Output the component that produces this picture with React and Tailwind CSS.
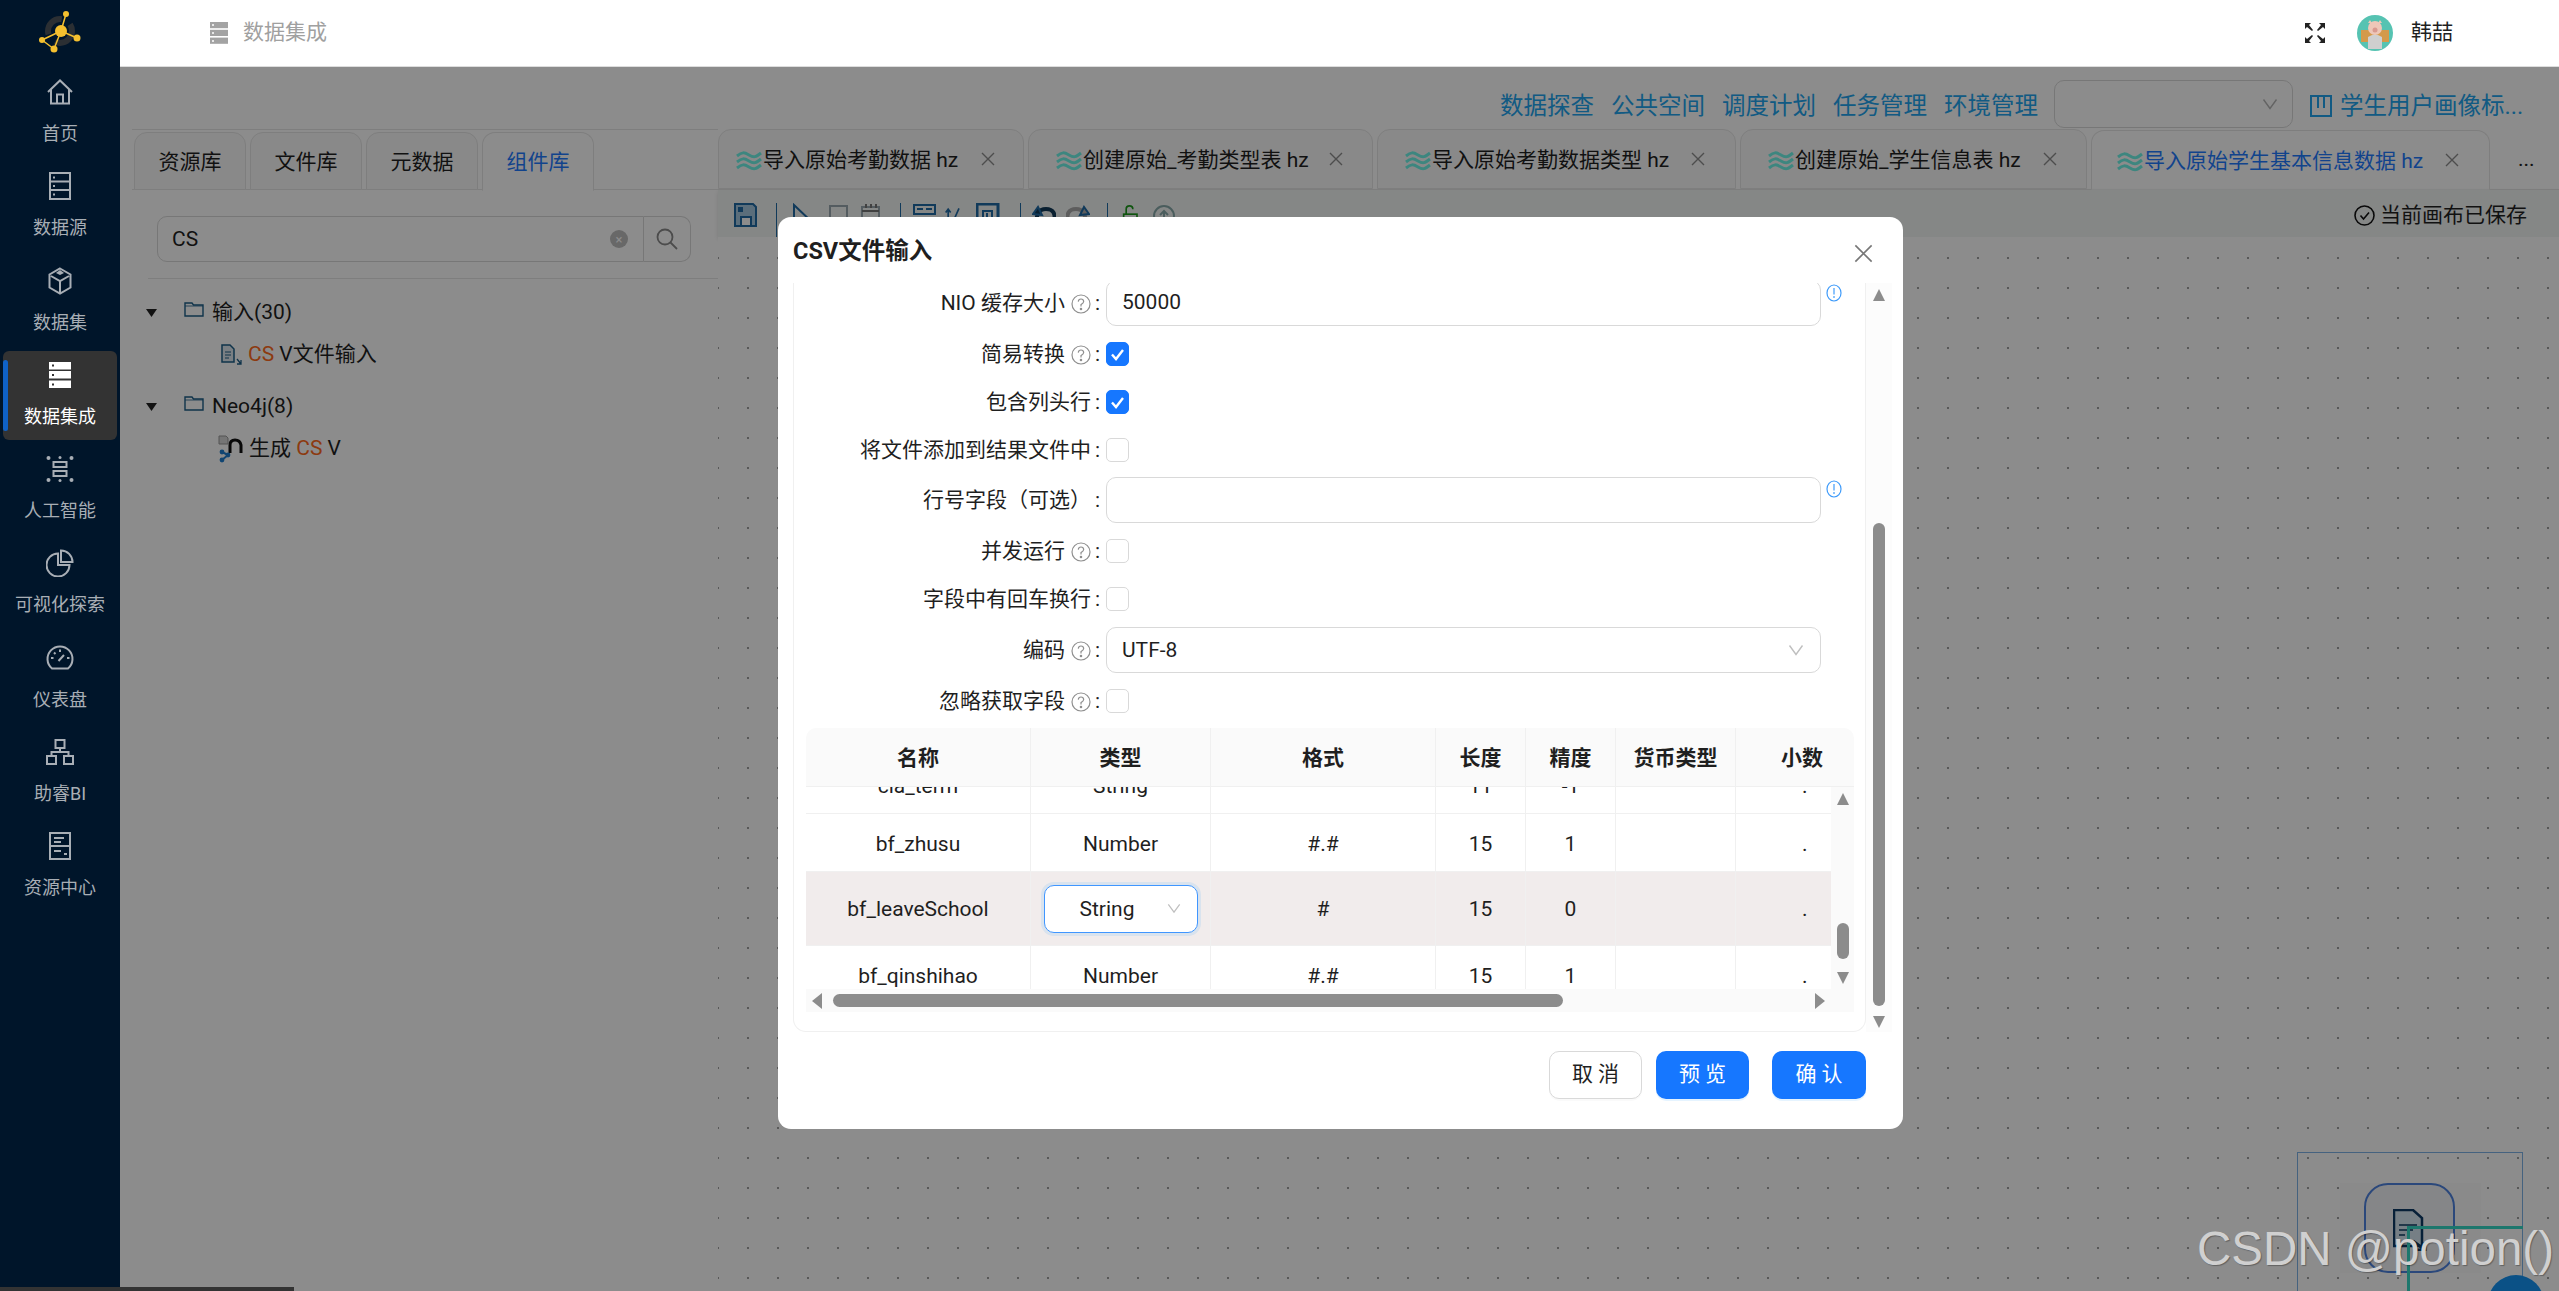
import React from "react";

const FONT = 'font-["Roboto","Noto_Sans_CJK_SC",sans-serif]';

function SideIcon({ name, active }) {
  const c = active ? "#ffffff" : "#a8aeb5";
  const p = { fill: "none", stroke: c, strokeWidth: 2 };
  if (name === "home")
    return (
      <svg width="28" height="26" viewBox="0 0 28 26">
        <path {...p} d="M2 13 14 1.5 26 13M5 10.5V24.5H23V10.5M11 24.5V15.5H17V24.5" />
      </svg>
    );
  if (name === "source")
    return (
      <svg width="22" height="28" viewBox="0 0 22 28">
        <rect {...p} x="1" y="1" width="20" height="26" />
        <path {...p} d="M1 9.5H21M1 18H21" />
        <path stroke={c} strokeWidth="2" d="M4 5.5H6M4 14H6M4 22.5H6" />
      </svg>
    );
  if (name === "box")
    return (
      <svg width="24" height="28" viewBox="0 0 24 28">
        <path {...p} d="M12 1.5 22.5 7.5V20.5L12 26.5 1.5 20.5V7.5ZM3 9 12 14 21 9M12 14V26" />
        <path fill={c} d="M12 3 16 6 12 8 8 6Z" />
      </svg>
    );
  if (name === "stack")
    return (
      <svg width="22" height="28" viewBox="0 0 22 28">
        <rect fill={c} x="0" y="1" width="22" height="7.5" />
        <rect fill={c} x="0" y="10" width="22" height="7.5" />
        <rect fill={c} x="0" y="19.5" width="22" height="7.5" />
        <path stroke="#333" strokeWidth="2" d="M3 4.5H5M3 14H5M3 23.5H5" />
      </svg>
    );
  if (name === "ai")
    return (
      <svg width="28" height="28" viewBox="0 0 28 28">
        <circle cx="2.5" cy="3" r="2" fill={c} />
        <circle cx="25.5" cy="3" r="2" fill={c} />
        <circle cx="2.5" cy="25" r="2" fill={c} />
        <circle cx="25.5" cy="25" r="2" fill={c} />
        <circle cx="14" cy="2.5" r="1.5" fill={c} />
        <circle cx="14" cy="25.5" r="1.5" fill={c} />
        <rect {...p} x="7.5" y="7" width="13" height="5" />
        <rect {...p} x="7.5" y="16" width="13" height="5" />
      </svg>
    );
  if (name === "pie")
    return (
      <svg width="28" height="28" viewBox="0 0 28 28">
        <path {...p} d="M12 4.5A11.5 11.5 0 1 0 23.5 16H12Z" />
        <path {...p} d="M15 1.5A11.5 11.5 0 0 1 26.5 13H15Z" />
      </svg>
    );
  if (name === "gauge")
    return (
      <svg width="28" height="26" viewBox="0 0 28 26">
        <path {...p} d="M6 23.5A12.5 12.5 0 1 1 22 23.5Z" />
        <path stroke={c} strokeWidth="2" d="M12.5 16 18 10M5 13H7.5M21 13H23.5M8 7.5 9.5 9M14 4.5V7" />
      </svg>
    );
  if (name === "bi")
    return (
      <svg width="28" height="26" viewBox="0 0 28 26">
        <rect {...p} x="9.5" y="1" width="9" height="8" />
        <rect {...p} x="1" y="17" width="9" height="8" />
        <rect {...p} x="18" y="17" width="9" height="8" />
        <path {...p} d="M14 9V13M5.5 17V13H22.5V17" />
      </svg>
    );
  return (
    <svg width="22" height="28" viewBox="0 0 22 28">
      <rect {...p} x="1" y="1" width="20" height="26" />
      <path {...p} d="M1 14H21M5 6H15M5 10H12" />
      <path stroke={c} strokeWidth="2" d="M5 19H12M15 22H18" />
    </svg>
  );
}

const NAV = [
  ["home", "首页"],
  ["source", "数据源"],
  ["box", "数据集"],
  ["stack", "数据集成", true],
  ["ai", "人工智能"],
  ["pie", "可视化探索"],
  ["gauge", "仪表盘"],
  ["bi", "助睿BI"],
  ["res", "资源中心"],
];

function Sidebar() {
  return (
    <aside className="relative z-20 flex w-[120px] shrink-0 flex-col bg-[#00152a]">
      <div className="flex h-[68px] justify-center pt-[7px]">
        <svg width="48" height="48" viewBox="0 0 48 48">
          <circle cx="24" cy="24" r="12" fill="none" stroke="#2b2f33" strokeWidth="6" strokeDasharray="24 10" />
          <path stroke="#f5c02f" strokeWidth="1.5" fill="none" d="M25 24 30 7M25 24 41 31M25 24 18 42M18 42 6 33M25 24 6 33" />
          <circle cx="25" cy="24" r="6" fill="#f5c02f" />
          <circle cx="30" cy="7" r="3" fill="#f5c02f" />
          <circle cx="41" cy="31" r="3.5" fill="#f5c02f" />
          <circle cx="18" cy="42" r="3.5" fill="#f5c02f" />
          <circle cx="6" cy="33" r="3" fill="#f5c02f" />
        </svg>
      </div>
      <nav className="flex flex-col gap-[5.25px] px-[3px]">
        {NAV.map(([icon, label, active]) => (
          <div
            key={label}
            className={`relative flex h-[89px] flex-col items-center rounded-[6px] pt-[11px] ${active ? "bg-[#333333] text-white" : "text-[#a8aeb5]"}`}
          >
            {active && <span className="absolute left-0 top-[9px] h-[71px] w-[5px] rounded-[3px] bg-[#0f62c8]" />}
            <div className="flex h-[26px] items-center">
              <SideIcon name={icon} active={active} />
            </div>
            <div className="mt-[17px] whitespace-nowrap text-[18px] leading-[24px]">{label}</div>
          </div>
        ))}
      </nav>
    </aside>
  );
}

function Header() {
  return (
    <header className="relative z-20 flex h-[67px] shrink-0 items-center border-b border-[#dddddd] bg-white pl-[90px] pr-[106px]">
      <svg width="18" height="22" viewBox="0 0 18 22">
        <rect x="0" y="0" width="18" height="6.2" fill="#a3a3a3" />
        <rect x="0" y="7.8" width="18" height="6.2" fill="#a3a3a3" />
        <rect x="0" y="15.6" width="18" height="6.2" fill="#a3a3a3" />
        <path stroke="#fff" strokeWidth="1.4" d="M2 3H4M2 11H4M2 19H4" />
      </svg>
      <span className="ml-[15px] text-[21px] text-[#a0a0a0]">数据集成</span>
      <svg className="ml-auto" width="20" height="20" viewBox="0 0 20 20" fill="#222">
        <path d="M0 0H6L4 2 8 7 7 8 2 4 0 6ZM20 0V6L18 4 13 8 12 7 16 2 14 0ZM0 20V14L2 16 7 12 8 13 4 18 6 20ZM20 20H14L16 18 12 13 13 12 18 16 20 14Z" />
      </svg>
      <svg className="ml-[32px]" width="36" height="36" viewBox="0 0 36 36">
        <circle cx="18" cy="18" r="18" fill="#56c3b2" />
        <rect x="4" y="15" width="28" height="12" fill="#d49a4a" />
        <path d="M11 34V22Q18 17 25 22V34Z" fill="#cfcfcf" />
        <circle cx="18" cy="13" r="7" fill="#eec7b8" />
        <circle cx="18" cy="15" r="2.5" fill="#d99a8f" />
        <path d="M11 8 13 5 15 8ZM25 8 23 5 21 8Z" fill="#eec7b8" />
      </svg>
      <span className="ml-[18px] text-[21px] text-[#1f1f1f]">韩喆</span>
    </header>
  );
}

function TopLinks() {
  return (
    <div className="flex h-[62px] shrink-0 items-start justify-end pr-[32px] pt-[13px] text-[23.5px] text-[#21a5ee]">
      <div className="mr-[9px] flex items-center gap-[17px] pt-[11px] leading-[30px]">
        <span>数据探查</span>
        <span>公共空间</span>
        <span>调度计划</span>
        <span>任务管理</span>
        <span>环境管理</span>
      </div>
      <div className="ml-[7px] flex h-[48px] w-[239px] items-center justify-end rounded-[10px] border border-[#d9d9d9] pr-[14px] text-[#b0b0b0]">
        <Chevron w={16} color="#b5b5b5" />
      </div>
      <div className="ml-[17px] flex items-center gap-[8px] pt-[11px] leading-[30px]">
        <svg width="22" height="22" viewBox="0 0 22 22" fill="none" stroke="#21a5ee" strokeWidth="2">
          <rect x="1" y="1" width="20" height="20" />
          <path d="M8 1V13M14 1V13" />
        </svg>
        <span className="w-[187px] whitespace-nowrap">学生用户画像标...</span>
      </div>
    </div>
  );
}

function Chevron({ w = 16, color = "#bfbfbf" }) {
  return (
    <svg width={w} height={w * 0.75} viewBox="0 0 16 12" fill="none" stroke={color} strokeWidth="1.4">
      <path d="M1.5 1.5 8 10.5 14.5 1.5" />
    </svg>
  );
}

function Folder() {
  return (
    <svg width="20" height="15" viewBox="0 0 20 15" fill="none" stroke="#1c5e88" strokeWidth="1.4">
      <path d="M1 14V1H8L9.5 3H19V14Z" />
      <path d="M1 4H19" strokeWidth="0.8" />
    </svg>
  );
}

function Caret() {
  return (
    <svg width="11" height="8" viewBox="0 0 11 8">
      <polygon points="0,0 11,0 5.5,8" fill="#222" />
    </svg>
  );
}

function LeftPanel() {
  const tabs = ["资源库", "文件库", "元数据", "组件库"];
  return (
    <div className="w-[586px] shrink-0 border-t border-[#e6e6e6]">
      <div className="flex h-[60px] border-b border-[#e6e6e6] pl-[2px] pt-[2px]">
        {tabs.map((t, i) => (
          <div
            key={t}
            className={`mr-[4px] flex h-[58px] w-[112px] items-center justify-center rounded-t-[13px] border border-[#e6e6e6] pt-[3px] text-[21px] ${i === 3 ? "-mb-px h-[59px] border-b-white bg-white text-[#1f7bff]" : "bg-[#fafafa] text-[#1f1f1f]"}`}
          >
            {t}
          </div>
        ))}
      </div>
      <div className="ml-[25px] mt-[26px] flex h-[46px] w-[534px]">
        <div className="flex flex-1 items-center justify-between rounded-l-[10px] border border-[#d9d9d9] pl-[14px] pr-[15px] text-[21px] text-[#1f1f1f]">
          <span className="pt-[2px]">CS</span>
          <span className="flex h-[18px] w-[18px] items-center justify-center rounded-full bg-[#bdbdbd] text-[13px] leading-none text-white">×</span>
        </div>
        <div className="flex w-[47px] items-center justify-center rounded-r-[10px] border border-l-0 border-[#d9d9d9]">
          <svg width="24" height="24" viewBox="0 0 24 24" fill="none" stroke="#8a8a8a" strokeWidth="1.8">
            <circle cx="10" cy="10" r="7.5" />
            <path d="M15.5 15.5 22 22" />
          </svg>
        </div>
      </div>
      <div className="ml-[14px] mt-[16px] text-[21px] text-[#1f1f1f]">
        <div className="ml-[2px] border-t border-[#e6e6e6]" />
        <div className="mt-[13px] flex h-[42px] items-center">
          <Caret />
          <span className="ml-[27px] -mt-[8px]"><Folder /></span>
          <span className="ml-[8px]">输入(30)</span>
        </div>
        <div className="flex h-[42px] items-center pl-[75px]">
          <svg width="21" height="22" viewBox="0 0 21 22" fill="none" stroke="#1c5e88" strokeWidth="1.5">
            <path d="M1 1H9L13 5V18H1Z" fill="#dfe8ee" />
            <path d="M4 8H10M4 11H10M4 14H8" strokeWidth="1" />
            <path d="M16 15 20 20M20 16V20H16" strokeWidth="1.3" />
          </svg>
          <span className="ml-[6px]"><span className="text-[#ff6a20]">CS</span> V文件输入</span>
        </div>
        <div className="mt-[10px] flex h-[42px] items-center">
          <Caret />
          <span className="ml-[27px] -mt-[8px]"><Folder /></span>
          <span className="ml-[8px]">Neo4j(8)</span>
        </div>
        <div className="flex h-[42px] items-center pl-[72px]">
          <svg width="26" height="28" viewBox="0 0 26 28" fill="none">
            <path d="M1 1H8L10 3V9H1Z" fill="#d5d5d5" stroke="#999" />
            <path d="M12 18V10Q12 5 17 5T23 10V18" stroke="#111" strokeWidth="3" />
            <path d="M4 17 10 20 4 25" stroke="#1f7fd0" strokeWidth="2" />
            <circle cx="4" cy="17" r="2.4" fill="#1f7fd0" />
            <circle cx="10" cy="20" r="2.4" fill="#1f7fd0" />
            <circle cx="4" cy="25" r="2.4" fill="#1f7fd0" />
          </svg>
          <span className="ml-[5px]">生成 <span className="text-[#ff6a20]">CS</span> V</span>
        </div>
      </div>
    </div>
  );
}

function Waves({ w = 26 }) {
  return (
    <svg className="mt-[4px]" width={w} height="20" viewBox="0 0 26 20" fill="none" stroke="#70f5e8" strokeWidth="3">
      <path d="M1 5C6 1 8 1 13 4S20 6 25 2" />
      <path d="M1 11C6 7 8 7 13 10S20 12 25 8" />
      <path d="M1 17C6 13 8 13 13 16S20 18 25 14" />
    </svg>
  );
}

const TABS = [
  ["导入原始考勤数据 hz", 306, false, "pl-[17px] pr-[28px]"],
  ["创建原始_考勤类型表 hz", 345, false, "pl-[27px] pr-[29px]"],
  ["导入原始考勤数据类型 hz", 359, false, "pl-[27px] pr-[30px]"],
  ["创建原始_学生信息表 hz", 347, false, "pl-[27px] pr-[29px]"],
  ["导入原始学生基本信息数据 hz", 399, true, "pl-[25px] pr-[30px]"],
];

function CloseX({ size = 14, color = "#8c8c8c", sw = 1.4 }) {
  return (
    <svg width={size} height={size} viewBox="0 0 14 14" fill="none" stroke={color} strokeWidth={sw}>
      <path d="M1 1 13 13M13 1 1 13" />
    </svg>
  );
}

function TabRow() {
  return (
    <div className="flex h-[61px] shrink-0 items-end border-b border-[#e6e6e6] pr-[10px]">
      {TABS.map(([t, w, active, pad]) => (
        <div
          key={t}
          style={{ width: w }}
          className={`mr-[4px] flex h-[60px] shrink-0 items-center rounded-t-[13px] border border-[#e6e6e6] ${pad} text-[21px] ${active ? "-mb-px border-b-[#f3f6f5] bg-white text-[#1f7bff]" : "bg-[#fafafa] text-[#1f1f1f]"}`}
        >
          <Waves />
          <span className="ml-[1px] whitespace-nowrap pt-[4px]">{t}</span>
          <span className="ml-auto"><CloseX /></span>
        </div>
      ))}
      <div className="ml-[24px] self-center text-[21px] leading-none text-[#222]">...</div>
    </div>
  );
}

function TBar({ children, w = 24 }) {
  return (
    <svg width={w} height="24" viewBox="0 0 24 24" fill="none" stroke="#1f6aa5" strokeWidth="2">
      {children}
    </svg>
  );
}
function Sep({ className }) {
  return <span className={`h-[34px] w-px shrink-0 bg-[#1f6aa5] ${className}`} />;
}

function Toolbar() {
  return (
    <div className="relative z-0 flex h-[47px] shrink-0 items-start bg-[#f3f6f5] pl-[15px] pr-[32px] pt-[13px] shadow-[0_2px_4px_rgba(0,0,0,0.12)]">
      <TBar>
        <path d="M2 1H20L23 4V23H2Z" fill="#a6c8e0" />
        <path d="M8 14H18V23H8Z" fill="#fff" />
        <path d="M6 5H9V8H6Z" fill="#1f6aa5" />
      </TBar>
      <Sep className="ml-[19px]" />
      <span className="ml-[15px]"><TBar><path d="M2 2 21 20H2Z" /></TBar></span>
      <span className="ml-[11px]"><TBar><rect x="3" y="3" width="17" height="18" stroke="#9aa8b0" /></TBar></span>
      <span className="ml-[8px]"><TBar><rect x="3" y="4" width="17" height="17" stroke="#9aa8b0" /><path d="M3 8H20M7 1V5M12 1V5M17 1V5" stroke="#777" /></TBar></span>
      <Sep className="ml-[17px]" />
      <span className="ml-[12px]"><TBar><rect x="1" y="2" width="21" height="9" /><path d="M4 6H10M13 6H19M1 15H22M1 20H22" /></TBar></span>
      <span className="ml-[7px]"><TBar w={20}><path d="M5 22V6M2 9 5 5 8 9M10 22 18 4" /></TBar></span>
      <span className="ml-[12px]"><TBar><rect x="1" y="1" width="21" height="22" strokeWidth="3" /><path d="M7 22V8H16V22M11 10V18" /></TBar></span>
      <Sep className="ml-[20px]" />
      <span className="ml-[11px]"><TBar><path d="M5 22Q3 6 14 6T22 20" strokeWidth="4" stroke="#123a58" /><path d="M1 11 6 4 10 12Z" fill="#123a58" /></TBar></span>
      <span className="ml-[10px]"><TBar><path d="M19 22Q21 6 10 6T2 20" strokeWidth="4" stroke="#aaa" /><path d="M23 11 18 4 14 12Z" fill="#aaa" /></TBar></span>
      <Sep className="ml-[17px]" />
      <span className="ml-[14px]"><TBar w={20}><rect x="2" y="11" width="16" height="12" stroke="#1d9a1d" /><path d="M5 11V5Q5 1 9 1T13 5" stroke="#1d9a1d" /></TBar></span>
      <span className="ml-[10px]"><TBar><circle cx="12" cy="13" r="10" stroke="#8aa" /><path d="M12 18V8M8 12 12 8 16 12" stroke="#8aa" /></TBar></span>
      <div className="ml-auto flex items-center gap-[5px] text-[21px] leading-[24px] text-[#1f1f1f]">
        <svg width="21" height="21" viewBox="0 0 21 21" fill="none" stroke="#111" strokeWidth="1.6">
          <circle cx="10.5" cy="10.5" r="9.5" />
          <path d="M6.5 10.5 9.5 14 15 7.5" />
        </svg>
        <span>当前画布已保存</span>
      </div>
    </div>
  );
}

function Canvas() {
  return (
    <div className="relative flex-1 bg-white bg-[radial-gradient(circle,#a0a0a0_1px,transparent_1.3px)] bg-[length:30px_30px] bg-[position:-15px_6px]">
      <div className="absolute left-[1579px] top-[915px] h-[200px] w-[226px] border border-[#7fb2e8]">
        <div className="absolute left-[42px] top-[30px] h-[90px] w-[141px] bg-[#fbfbfb]" />
        <div className="absolute left-[66px] top-[30px] flex h-[90px] w-[91px] items-center justify-center rounded-[24px] border-2 border-[#4f84e0] bg-[#f3f4f8]">
          <svg width="34" height="42" viewBox="0 0 34 42" fill="none" stroke="#0d3b66" strokeWidth="2.5" className="mt-[4px]">
            <path d="M1 1H20L29 9V37H1Z" fill="#d8e8f2" />
            <path d="M6 16H24M6 21H20M6 26H12" strokeWidth="1.5" />
            <path d="M20 32 32 41M32 33V41H24" strokeWidth="3" />
          </svg>
        </div>
        <div className="absolute left-[109px] top-[73px] h-[200px] w-[116px] border-l-[3px] border-t-[3px] border-[#36d9c6]" />
        <div className="absolute left-[190px] top-[122px] h-[56px] w-[56px] rounded-full bg-[#1494f4]" />
      </div>
    </div>
  );
}

function Help() {
  return (
    <svg width="20" height="20" viewBox="0 0 20 20" fill="none" stroke="#8f8f8f" strokeWidth="1.2">
      <circle cx="10" cy="10" r="9" />
      <path d="M7.3 7.6Q7.5 5 10 5T12.7 7.6Q12.7 9.2 10 10.6V12.5" />
      <circle cx="10" cy="15" r="0.7" fill="#8f8f8f" />
    </svg>
  );
}
function Info({ className = "" }) {
  return (
    <svg className={className} width="16" height="18" viewBox="0 0 16 18" fill="none" stroke="#3f9bfa" strokeWidth="1.2">
      <ellipse cx="8" cy="9" rx="7" ry="8" />
      <path d="M8 4V10.5M8 12V14" />
    </svg>
  );
}

function Label({ text, help }) {
  return (
    <div className="flex w-[306px] shrink-0 items-center justify-end whitespace-nowrap pt-[1px] text-[21px] leading-none text-[#1f1f1f]">
      <span>{text}</span>
      {help && <span className="ml-[6px] flex"><Help /></span>}
      <span className="w-[9px] text-right">:</span>
    </div>
  );
}

function Check({ on }) {
  return (
    <span className={`flex h-[24px] w-[23px] items-center justify-center rounded-[5px] border ${on ? "border-[#1677ff] bg-[#1677ff]" : "border-[#d9d9d9] bg-white"}`}>
      {on && (
        <svg width="15" height="13" viewBox="0 0 15 13" fill="none" stroke="#fff" strokeWidth="2.4">
          <path d="M2 6.5 6 11 13 2" />
        </svg>
      )}
    </span>
  );
}

function CheckRow({ label, help, on }) {
  return (
    <div className="flex h-[48px] items-center">
      <Label text={label} help={help} />
      <span className="ml-[6px]"><Check on={on} /></span>
    </div>
  );
}

const COLS = "grid grid-cols-[225px_180px_225px_90px_90px_120px_95px]";
const CELL = "flex items-center justify-center border-r border-[#f0f0f0] text-[21px] leading-none text-[#1f1f1f]";

function Row({ name, type, fmt, len, prec, h, selected }) {
  const txt = selected ? "pt-[1px]" : "pt-[3px]";
  return (
    <div style={{ height: h }} className={`${COLS} border-b border-[#f0f0f0] ${selected ? "bg-[#f1ecec]" : "bg-white"}`}>
      <div className={`${CELL} ${txt}`}>{name}</div>
      <div className={selected ? CELL : `${CELL} ${txt}`}>
        {selected ? (
          <div className="flex h-[48px] w-[154px] items-center rounded-[10px] border border-[#4096ff] bg-white pl-[35px] pr-[16px] shadow-[0_0_0_3px_rgba(5,145,255,0.1)]">
            <span className="pt-[2px]">{type}</span>
            <span className="ml-auto"><Chevron w={14} /></span>
          </div>
        ) : type}
      </div>
      <div className={`${CELL} ${txt}`}>{fmt}</div>
      <div className={`${CELL} ${txt}`}>{len}</div>
      <div className={`${CELL} ${txt}`}>{prec}</div>
      <div className={CELL} />
      <div className={`flex items-center pl-[66px] text-[21px] leading-none text-[#1f1f1f] ${txt}`}>.</div>
    </div>
  );
}

function Tri({ dir }) {
  const pts = { up: "6,0 12,12 0,12", down: "0,0 12,0 6,12", left: "10,0 10,16 0,8", right: "0,0 10,8 0,16" }[dir];
  const horizontal = dir === "left" || dir === "right";
  return (
    <svg width={horizontal ? 10 : 12} height={horizontal ? 16 : 12} viewBox={horizontal ? "0 0 10 16" : "0 0 12 12"}>
      <polygon points={pts} fill="#8c8c8c" />
    </svg>
  );
}

function DataTable() {
  const heads = ["名称", "类型", "格式", "长度", "精度", "货币类型"];
  return (
    <div className="relative ml-[12px] mt-[3px] w-[1048px]">
      <div className="grid h-[59px] grid-cols-[225px_180px_225px_90px_90px_120px_118px] rounded-t-[10px] border-b border-[#f0f0f0] bg-[#fafafa]">
        {heads.map((h) => (
          <div key={h} className={`${CELL} pt-[2px] font-bold`}>{h}</div>
        ))}
        <div className="flex items-center pl-[45px] pt-[2px] text-[21px] font-bold leading-none text-[#1f1f1f]">小数</div>
      </div>
      <div className="flex h-[202px] overflow-hidden">
        <div className="w-[1025px] shrink-0">
          <div className="-mt-[31px]">
            <Row name="cla_term" type="String" fmt="" len="11" prec="-1" h={58} />
            <Row name="bf_zhusu" type="Number" fmt="#.#" len="15" prec="1" h={58} />
            <Row name="bf_leaveSchool" type="String" fmt="#" len="15" prec="0" h={74} selected />
            <Row name="bf_qinshihao" type="Number" fmt="#.#" len="15" prec="1" h={58} />
          </div>
        </div>
        <div className="flex w-[23px] flex-col items-center bg-[#fafafa]">
          <span className="mt-[6px] flex"><Tri dir="up" /></span>
          <span className="mt-[118px] h-[36px] w-[12px] shrink-0 rounded-[6px] bg-[#8c8c8c]" />
          <span className="mt-[13px] flex"><Tri dir="down" /></span>
        </div>
      </div>
      <div className="flex h-[23px] items-center bg-[#fafafa] pl-[6px]">
        <Tri dir="left" />
        <span className="ml-[11px] h-[13px] w-[730px] rounded-[7px] bg-[#8c8c8c]" />
        <span className="ml-[252px]"><Tri dir="right" /></span>
      </div>
    </div>
  );
}

function Dialog() {
  return (
    <div className="absolute left-[778px] top-[217px] z-30 flex h-[912px] w-[1125px] flex-col rounded-[13px] bg-white">
      <div className="flex h-[66px] shrink-0 items-start justify-between pl-[15px] pr-[30px] pt-[17px]">
        <span className="text-[23.5px] font-bold leading-[34px] text-[#1f1f1f]">CSV文件输入</span>
        <span className="mt-[10px]"><CloseX size={19} color="#777" sw={1.2} /></span>
      </div>
      <div className="ml-[15px] flex h-[749px] shrink-0">
        <div className="w-[1073px] shrink-0 overflow-hidden rounded-b-[13px] border-x border-b border-[#f0f0f0]">
          <div className="-mt-[3px]">
            <div className="flex h-[46px]">
              <Label text="NIO 缓存大小" help />
              <div className="ml-[6px] flex w-[715px] items-center rounded-[10px] border border-[#d9d9d9] pl-[15px] text-[21px] text-[#1f1f1f]">50000</div>
              <Info className="ml-[5px] mt-[4px]" />
            </div>
            <div className="mt-[4px]">
              <CheckRow label="简易转换" help on />
              <CheckRow label="包含列头行" on />
              <CheckRow label="将文件添加到结果文件中" />
            </div>
            <div className="mt-[3px] flex h-[46px]">
              <Label text="行号字段（可选）" />
              <div className="ml-[6px] w-[715px] rounded-[10px] border border-[#d9d9d9]" />
              <Info className="ml-[5px] mt-[3px]" />
            </div>
            <div className="mt-[4px]">
              <CheckRow label="并发运行" help />
              <CheckRow label="字段中有回车换行" />
            </div>
            <div className="mt-[4px] flex h-[46px]">
              <Label text="编码" help />
              <div className="ml-[6px] flex w-[715px] items-center justify-between rounded-[10px] border border-[#d9d9d9] pl-[15px] pr-[16px] text-[21px] text-[#1f1f1f]">
                <span className="pt-[1px]">UTF-8</span>
                <Chevron w={16} />
              </div>
            </div>
            <div className="mt-[4px]">
              <CheckRow label="忽略获取字段" help />
            </div>
            <DataTable />
          </div>
        </div>
        <div className="flex w-[26px] flex-col items-center bg-[#fcfcfc] pr-[1px]">
          <span className="mt-[6px] flex"><Tri dir="up" /></span>
          <span className="mt-[222px] h-[483px] w-[12px] rounded-[6px] bg-[#8c8c8c]" />
          <span className="mt-[10px] flex"><Tri dir="down" /></span>
        </div>
      </div>
      <div className="mt-[19px] flex justify-end pr-[37px] text-[21px]">
        <button className="h-[48px] w-[93px] rounded-[10px] border border-[#d9d9d9] bg-white text-[#1f1f1f] shadow-[0_2px_0_rgba(0,0,0,0.02)]">取 消</button>
        <button className="ml-[14px] h-[48px] w-[93px] rounded-[10px] bg-[#1677ff] text-white shadow-[0_2px_0_rgba(5,145,255,0.1)]">预 览</button>
        <button className="ml-[23px] h-[48px] w-[94px] rounded-[10px] bg-[#1677ff] text-white shadow-[0_2px_0_rgba(5,145,255,0.1)]">确 认</button>
      </div>
    </div>
  );
}

export default function App() {
  return (
    <div className={`relative flex h-[1291px] w-[2559px] overflow-hidden bg-white ${FONT}`}>
      <Sidebar />
      <div className="flex min-w-0 flex-1 flex-col">
        <Header />
        <TopLinks />
        <div className="flex min-h-0 flex-1 pl-[12px]">
          <LeftPanel />
          <div className="flex min-w-0 flex-1 flex-col">
            <TabRow />
            <Toolbar />
            <Canvas />
          </div>
        </div>
      </div>
      <div className="absolute inset-0 z-10 bg-black/45" />
      <Dialog />
      <div className="absolute bottom-0 left-0 z-40 h-[4px] w-[294px] bg-[#333333]" />
      <div className="absolute bottom-[19px] right-[5px] z-50 font-['Liberation_Sans',sans-serif] text-[47.5px] leading-none text-[#d0d0d0] [text-shadow:1px_1px_1px_rgba(0,0,0,0.3)]">
        CSDN @potion()
      </div>
    </div>
  );
}
